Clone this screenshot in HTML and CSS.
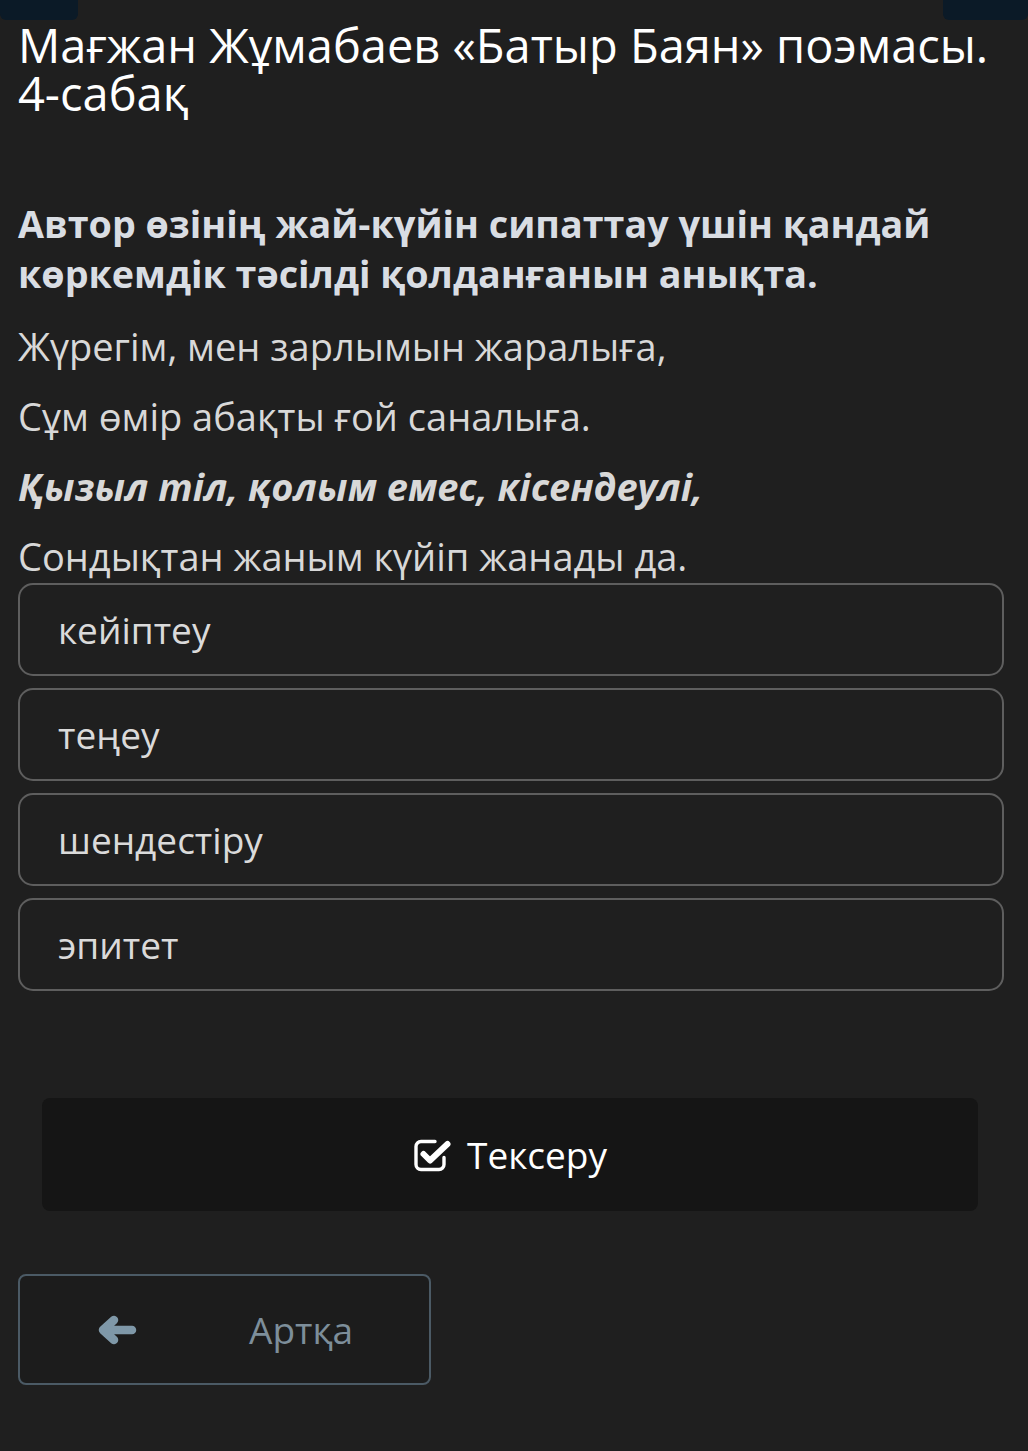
FILE: index.html
```html
<!DOCTYPE html>
<html lang="kk">
<head>
<meta charset="utf-8">
<link rel="stylesheet" href="styles.css">
</head>
<body>
<div class="topbar"><span class="tab tab-left"></span><span class="tab tab-right"></span></div>
<main class="page">
  <h1 class="title">Мағжан Жұмабаев «Батыр Баян» поэмасы. 4-сабақ</h1>
  <h2 class="question">Автор өзінің жай-күйін сипаттау үшін қандай көркемдік тәсілді қолданғанын анықта.</h2>
  <p class="line">Жүрегім, мен зарлымын жаралыға,</p>
  <p class="line">Сұм өмір абақты ғой саналыға.</p>
  <p class="line strong">Қызыл тіл, қолым емес, кісендеулі,</p>
  <p class="line">Сондықтан жаным күйіп жанады да.</p>
  <div class="options">
    <div class="option">кейіптеу</div>
    <div class="option">теңеу</div>
    <div class="option">шендестіру</div>
    <div class="option">эпитет</div>
  </div>
  <div class="check-wrap">
    <button class="check">
      <svg class="check-icon" viewBox="0 0 40 34" width="40" height="34"><path d="M22 3.5H8a5 5 0 0 0-5 5v18a5 5 0 0 0 5 5h18a5 5 0 0 0 5-5v-7" fill="none" stroke="#fff" stroke-width="3.4" stroke-linecap="round"/><path d="M10.5 16l6.5 6.5L34.5 6" fill="none" stroke="#fff" stroke-width="6" stroke-linecap="round" stroke-linejoin="round"/></svg>
      <span>Тексеру</span>
    </button>
  </div>
  <button class="back">
    <svg class="back-icon" viewBox="0 0 40 30" width="40" height="30"><path d="M35 15H8M17 5L6 15l11 10" fill="none" stroke="#7f98a8" stroke-width="8.5" stroke-linecap="round" stroke-linejoin="round"/></svg>
    <span class="back-text">Артқа</span>
  </button>
</main>
</body>
</html>
```
FILE: styles.css
```css
html, body {
  margin: 0;
  padding: 0;
  background: #1f1f1f;
}
body {
  font-family: "Open Sans", "Noto Sans", sans-serif;
  color: #dcdcdc;
  width: 1028px;
  min-height: 1451px;
}
.topbar {
  display: flex;
  justify-content: space-between;
  height: 20px;
}
.tab {
  display: block;
  background: #0b1a27;
  height: 20px;
  border-radius: 0 0 6px 6px;
}
.tab-left { width: 78px; }
.tab-right { width: 85px; }
.page {
  padding: 0 24px 0 18px;
}
.title {
  margin: 0;
  font-size: 47px;
  line-height: 48px;
  font-weight: 400;
  color: #ffffff;
  padding-top: 1px;
}
.question {
  margin: 82px 0 0;
  font-size: 37.7px;
  line-height: 50px;
  font-weight: 700;
  color: #d9dde3;
}
.line {
  margin: 18px 0 0;
  font-size: 38px;
  line-height: 52px;
  color: #d8d8d8;
}
.question + .line {
  margin-top: 21px;
}
.line.strong {
  font-weight: 700;
  font-style: italic;
}
.options {
  display: flex;
  flex-direction: column;
  gap: 12px;
  margin-top: 1px;
}
.option {
  height: 93px;
  box-sizing: border-box;
  border: 2px solid #5e5e5e;
  border-radius: 15px;
  padding: 0 38px;
  display: flex;
  align-items: center;
  font-size: 37px;
  color: #dadada;
  width: 986px;
}
.check-wrap {
  padding: 107px 26px 0 24px;
}
.check {
  width: 936px;
  height: 113px;
  border: none;
  border-radius: 8px;
  background: #151515;
  display: flex;
  align-items: center;
  justify-content: center;
  gap: 14px;
  font-family: inherit;
  font-size: 37px;
  color: #ffffff;
  cursor: pointer;
}
.back {
  margin-top: 63px;
  width: 413px;
  height: 111px;
  box-sizing: border-box;
  border: 2px solid #4b5a65;
  border-radius: 8px;
  background: #1c1c1c;
  display: flex;
  align-items: center;
  padding: 0 0 0 77px;
  font-family: inherit;
  font-size: 37px;
  color: #7d8e9a;
}
.back-icon {
  margin-right: 112px;
}
```
